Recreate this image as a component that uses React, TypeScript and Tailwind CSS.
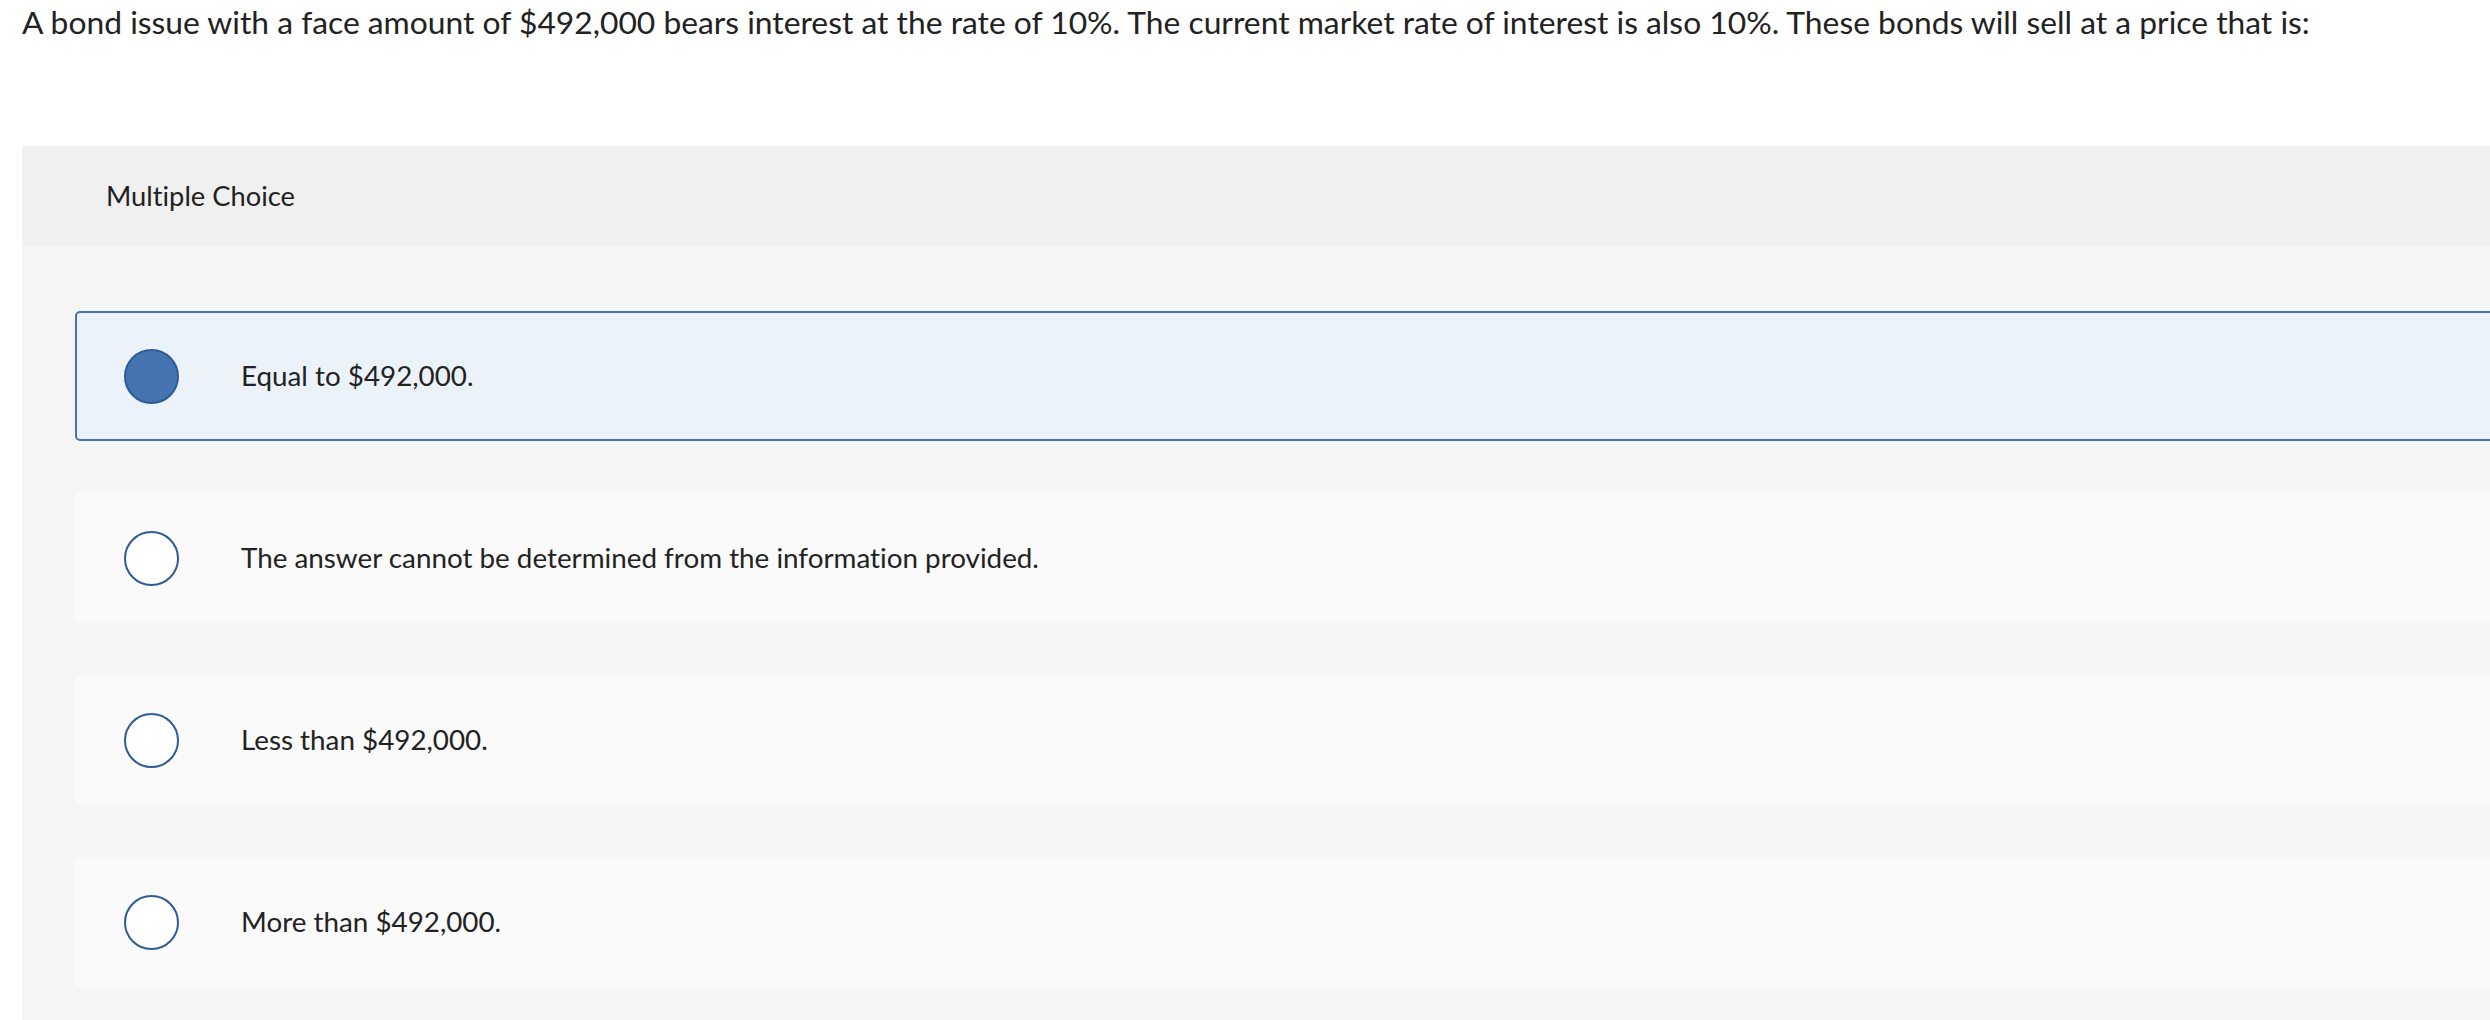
import React from "react";

const options = [
  { text: "Equal to $492,000.", selected: true },
  { text: "The answer cannot be determined from the information provided.", selected: false },
  { text: "Less than $492,000.", selected: false },
  { text: "More than $492,000.", selected: false },
];

export default function App() {
  return (
    <div className="w-[2490px] h-[1020px] overflow-hidden bg-white text-[#222222] [font-variant-ligatures:none]" style={{ fontFamily: "Lato, 'Open Sans', sans-serif" }}>
      <p className="pl-[22px] pt-[4px] text-[31.8px] leading-[36px] whitespace-nowrap">
        A bond issue with a face amount of $492,000 bears interest at the rate of 10%. The current market rate of interest is also 10%. These bonds will sell at a price that is:
      </p>
      <div className="ml-[22px] mt-[106px] w-[2520px] rounded-[4px] bg-[#f5f5f5] overflow-hidden">
        <div className="h-[100px] bg-[#f0f0f0] flex items-center pl-[84px] text-[27.3px]">
          Multiple Choice
        </div>
        <div className="pt-[65px] pl-[53px] pb-[60px] flex flex-col gap-[52px]">
          {options.map((o, i) => (
            <div
              key={i}
              className={
                o.selected
                  ? "h-[130px] rounded-[5px] border-2 border-[#4673b1] bg-[#ebf2fa] flex items-center pl-[47px]"
                  : "h-[130px] rounded-[5px] bg-[#fafafa] flex items-center pl-[49px]"
              }
            >
              {o.selected ? (
                <div className="w-[55px] h-[55px] rounded-full bg-[#4673b1] border-2 border-[#2f5b94] shrink-0" />
              ) : (
                <div className="w-[55px] h-[55px] rounded-full bg-white border-[2.5px] border-[#2d5b94] shrink-0" />
              )}
              <span className="ml-[62px] text-[27.8px] whitespace-nowrap">{o.text}</span>
            </div>
          ))}
        </div>
      </div>
    </div>
  );
}
